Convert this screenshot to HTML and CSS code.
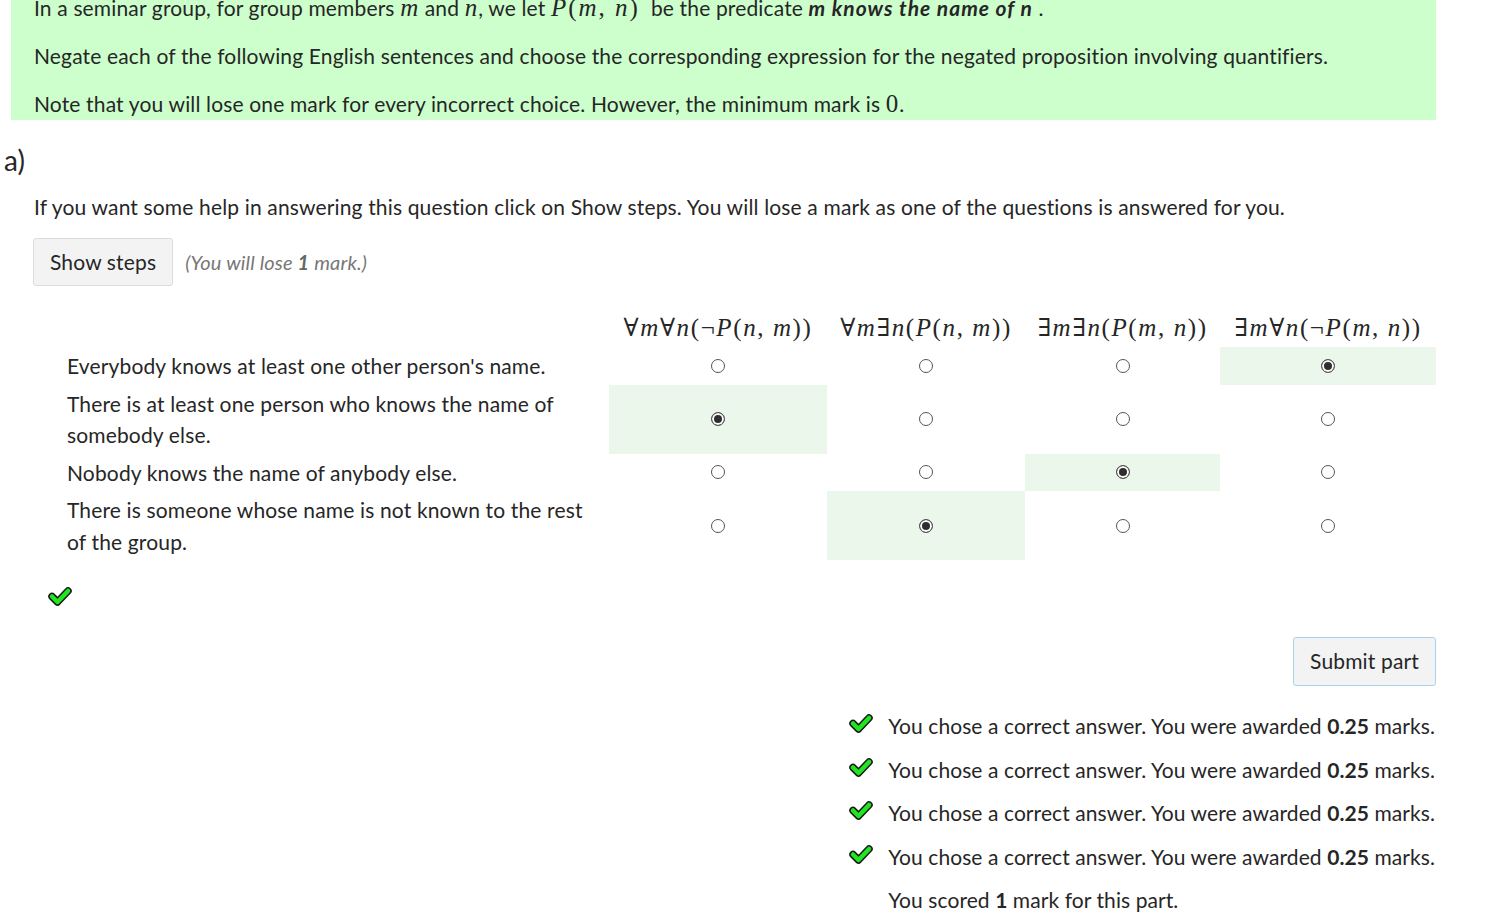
FILE: index.html
```html
<!DOCTYPE html>
<html lang="en">
<head>
<meta charset="utf-8">
<title>Negation of quantified statements</title>
<link rel="stylesheet" href="styles.css">
</head>
<body>
<div class="statement">
  <p>In a seminar group, for group members <span class="m"><i>m</i></span> and <span class="m"><i>n</i></span>, we let <span class="m mi"><i>P</i>(<i>m</i>, <i>n</i>)</span>&nbsp; be the predicate <b class="emph"><i>m knows the name of n</i></b> .</p>
  <p>Negate each of the following English sentences and choose the corresponding expression for the negated proposition involving quantifiers.</p>
  <p>Note that you will lose one mark for every incorrect choice. However, the minimum mark is <span class="m">0</span>.</p>
</div>

<div class="part">
  <h2 class="part-name">a)</h2>
  <div class="part-body">
    <p class="help">If you want some help in answering this question click on Show steps. You will lose a mark as one of the questions is answered for you.</p>
    <div class="steps">
      <button class="btn">Show steps</button>
      <span class="penalty">(You will lose <b>1</b> mark.)</span>
    </div>

    <table class="matrix">
      <colgroup>
        <col class="c-text"><col class="c1"><col class="c2"><col class="c3"><col class="c4">
      </colgroup>
      <thead>
        <tr>
          <th></th>
          <th><span class="m mh">∀<i>m</i>∀<i>n</i>(¬<i>P</i>(<i>n</i>, <i>m</i>))</span></th>
          <th><span class="m mh">∀<i>m</i>∃<i>n</i>(<i>P</i>(<i>n</i>, <i>m</i>))</span></th>
          <th><span class="m mh">∃<i>m</i>∃<i>n</i>(<i>P</i>(<i>m</i>, <i>n</i>))</span></th>
          <th><span class="m mh">∃<i>m</i>∀<i>n</i>(¬<i>P</i>(<i>m</i>, <i>n</i>))</span></th>
        </tr>
      </thead>
      <tbody>
        <tr>
          <td class="q">Everybody knows at least one other person's name.</td>
          <td><input type="radio" name="r1"></td>
          <td><input type="radio" name="r1"></td>
          <td><input type="radio" name="r1"></td>
          <td class="sel"><input type="radio" name="r1" checked></td>
        </tr>
        <tr>
          <td class="q">There is at least one person who knows the name of somebody else.</td>
          <td class="sel"><input type="radio" name="r2" checked></td>
          <td><input type="radio" name="r2"></td>
          <td><input type="radio" name="r2"></td>
          <td><input type="radio" name="r2"></td>
        </tr>
        <tr>
          <td class="q">Nobody knows the name of anybody else.</td>
          <td><input type="radio" name="r3"></td>
          <td><input type="radio" name="r3"></td>
          <td class="sel"><input type="radio" name="r3" checked></td>
          <td><input type="radio" name="r3"></td>
        </tr>
        <tr>
          <td class="q">There is someone whose name is not known to the rest of the group.</td>
          <td><input type="radio" name="r4"></td>
          <td class="sel"><input type="radio" name="r4" checked></td>
          <td><input type="radio" name="r4"></td>
          <td><input type="radio" name="r4"></td>
        </tr>
      </tbody>
    </table>

    <div class="part-mark">
      <svg class="tick" viewBox="0 0 24 20" width="24" height="20"><path d="M4 10.5 L9.5 16 L20 5" fill="none" stroke="#1a1a1a" stroke-width="7.5" stroke-linecap="round" stroke-linejoin="round"/><path d="M4 10.5 L9.5 16 L20 5" fill="none" stroke="#22e522" stroke-width="4.5" stroke-linecap="round" stroke-linejoin="round"/></svg>
    </div>
  </div>

  <div class="submit-row">
    <button class="btn btn-submit">Submit part</button>
  </div>

  <ul class="feedback">
    <li><svg class="tick" viewBox="0 0 24 20" width="24" height="20"><path d="M4 10.5 L9.5 16 L20 5" fill="none" stroke="#1a1a1a" stroke-width="7.5" stroke-linecap="round" stroke-linejoin="round"/><path d="M4 10.5 L9.5 16 L20 5" fill="none" stroke="#22e522" stroke-width="4.5" stroke-linecap="round" stroke-linejoin="round"/></svg><span>You chose a correct answer. You were awarded <b>0.25</b> marks.</span></li>
    <li><svg class="tick" viewBox="0 0 24 20" width="24" height="20"><path d="M4 10.5 L9.5 16 L20 5" fill="none" stroke="#1a1a1a" stroke-width="7.5" stroke-linecap="round" stroke-linejoin="round"/><path d="M4 10.5 L9.5 16 L20 5" fill="none" stroke="#22e522" stroke-width="4.5" stroke-linecap="round" stroke-linejoin="round"/></svg><span>You chose a correct answer. You were awarded <b>0.25</b> marks.</span></li>
    <li><svg class="tick" viewBox="0 0 24 20" width="24" height="20"><path d="M4 10.5 L9.5 16 L20 5" fill="none" stroke="#1a1a1a" stroke-width="7.5" stroke-linecap="round" stroke-linejoin="round"/><path d="M4 10.5 L9.5 16 L20 5" fill="none" stroke="#22e522" stroke-width="4.5" stroke-linecap="round" stroke-linejoin="round"/></svg><span>You chose a correct answer. You were awarded <b>0.25</b> marks.</span></li>
    <li><svg class="tick" viewBox="0 0 24 20" width="24" height="20"><path d="M4 10.5 L9.5 16 L20 5" fill="none" stroke="#1a1a1a" stroke-width="7.5" stroke-linecap="round" stroke-linejoin="round"/><path d="M4 10.5 L9.5 16 L20 5" fill="none" stroke="#22e522" stroke-width="4.5" stroke-linecap="round" stroke-linejoin="round"/></svg><span>You chose a correct answer. You were awarded <b>0.25</b> marks.</span></li>
    <li class="total"><span>You scored <b>1</b> mark for this part.</span></li>
  </ul>
</div>
</body>
</html>
```

FILE: styles.css
```css
html, body {
  margin: 0;
  padding: 0;
  background: #fff;
}
body {
  font-family: "Lato", "Open Sans", sans-serif;
  font-size: 21px;
  line-height: 28px;
  color: #262626;
  letter-spacing: 0.15px;
  overflow: hidden;
}
.m {
  font-family: "Liberation Serif", "DejaVu Serif", serif;
  font-size: 25px;
  line-height: 1;
  letter-spacing: 1px;
}
.m i { font-style: italic; }
.mh { letter-spacing: 1.6px; }
.mi { letter-spacing: 2px; }
.emph { letter-spacing: 1px; }

.statement {
  margin: -6px 61px 0 11px;
  padding: 0 23px 2px;
  background: #ccffcc;
}
.statement p { margin: 0; }
.statement p + p { margin-top: 20px; }

.part { margin: 0 61px 0 0; }
.part-name {
  margin: 24px 0 0 4px;
  font-size: 28px;
  line-height: 32px;
  font-weight: 400;
  letter-spacing: 0;
}
.part-body { padding-left: 33px; }
.help { margin: 17px 0 0 1px; }

.steps {
  display: flex;
  align-items: center;
  gap: 12px;
  margin-top: 17px;
}
.btn {
  font-family: inherit;
  font-size: 21px;
  line-height: 28px;
  letter-spacing: 0.15px;
  color: #262626;
  background: #f3f3f3;
  border: 1px solid #dcdcdc;
  border-radius: 3px;
  padding: 9px 16px;
  margin: 0;
}
.penalty {
  font-style: italic;
  color: #777;
  font-size: 20px;
}
.penalty b { color: #666; }

.matrix {
  margin: 23px 0 0 34px;
  border-collapse: collapse;
  border-spacing: 0;
  table-layout: fixed;
  width: 1369px;
}
.c-text { width: 542px; }
.c1 { width: 218px; }
.c2 { width: 198px; }
.c3 { width: 195px; }
.c4 { width: 216px; }
.matrix th {
  height: 38px;
  padding: 0;
  font-weight: 400;
  text-align: center;
  white-space: nowrap;
  vertical-align: middle;
}
.matrix td {
  padding: 3px 0;
  line-height: 31.5px;
  text-align: center;
  vertical-align: middle;
}
.matrix td.q {
  text-align: left;
  padding-right: 14px;
}
.matrix td.sel { background: #ecf7ec; }

input[type="radio"] {
  appearance: none;
  -webkit-appearance: none;
  display: block;
  width: 14px;
  height: 14px;
  margin: 0 auto;
  border: 1px solid #555;
  border-radius: 50%;
  background: #fff;
}
input[type="radio"]:checked {
  background: #2e2e2e;
  box-shadow: inset 0 0 0 2px #fff;
}

.part-mark {
  margin: 26px 0 0 15px;
  height: 22px;
}
.tick { display: block; }

.submit-row {
  display: flex;
  justify-content: flex-end;
  margin-top: 29px;
}
.btn-submit {
  border-color: #a9d2ee;
  padding: 9px 16px 10px;
}

.feedback {
  list-style: none;
  width: max-content;
  margin: 26px 0 0 auto;
  padding: 0 1px 0 0;
  letter-spacing: 0.08px;
}
.feedback li {
  display: flex;
  align-items: center;
  gap: 15px;
  line-height: 28px;
  margin-bottom: 15.5px;
}
.feedback li .tick { margin-top: -6px; }
.feedback li.total { padding-left: 39px; }
```
